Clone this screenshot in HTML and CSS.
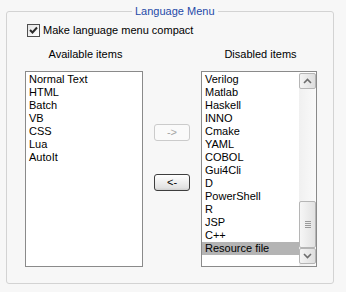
FILE: index.html
```html
<!DOCTYPE html>
<html lang="en">
<head>
    <meta charset="UTF-8">
    <title>Language Menu</title>
    <link rel="stylesheet" href="styles.css">
</head>
<body>
    <div class="group">
        <div class="group-title">Language Menu</div>

        <label class="check-row">
            <span class="checkbox">
                <svg width="9" height="9" viewBox="0 0 9 9">
                    <path d="M1 4 L3.5 6.5 L8 1.5" fill="none" stroke="#2b2b2b" stroke-width="2"/>
                </svg>
            </span>
            Make language menu compact
        </label>

        <div class="columns">
            <div class="column left-col">
                <div class="col-label">Available items</div>
                <div class="listbox left-list">
                    <div class="items">
                        <div class="item">Normal Text</div>
                        <div class="item">HTML</div>
                        <div class="item">Batch</div>
                        <div class="item">VB</div>
                        <div class="item">CSS</div>
                        <div class="item">Lua</div>
                        <div class="item">AutoIt</div>
                    </div>
                </div>
            </div>

            <div class="middle">
                <button class="btn disabled">-&gt;</button>
                <button class="btn">&lt;-</button>
            </div>

            <div class="column right-col">
                <div class="col-label">Disabled items</div>
                <div class="listbox right-list">
                    <div class="items">
                        <div class="item">Verilog</div>
                        <div class="item">Matlab</div>
                        <div class="item">Haskell</div>
                        <div class="item">INNO</div>
                        <div class="item">Cmake</div>
                        <div class="item">YAML</div>
                        <div class="item">COBOL</div>
                        <div class="item">Gui4Cli</div>
                        <div class="item">D</div>
                        <div class="item">PowerShell</div>
                        <div class="item">R</div>
                        <div class="item">JSP</div>
                        <div class="item">C++</div>
                        <div class="item selected">Resource file</div>
                    </div>
                    <div class="scrollbar">
                        <div class="sb-btn">
                            <svg width="9" height="6" viewBox="0 0 9 6">
                                <path d="M1 5 L4.5 1.5 L8 5" fill="none" stroke="#6d6d6d" stroke-width="1.6"/>
                            </svg>
                        </div>
                        <div class="sb-track"></div>
                        <div class="sb-thumb">
                            <div class="grip"></div>
                            <div class="grip"></div>
                            <div class="grip"></div>
                            <div class="grip"></div>
                        </div>
                        <div class="sb-btn">
                            <svg width="9" height="6" viewBox="0 0 9 6">
                                <path d="M1 1 L4.5 4.5 L8 1" fill="none" stroke="#6d6d6d" stroke-width="1.6"/>
                            </svg>
                        </div>
                    </div>
                </div>
            </div>
        </div>
    </div>
</body>
</html>
```

FILE: styles.css
```css
* {
    margin: 0;
    padding: 0;
    box-sizing: border-box;
}

body {
    background: #f7f7f7;
    font-family: "Liberation Sans", Arial, sans-serif;
    font-size: 11px;
    color: #000;
    width: 346px;
    height: 292px;
    overflow: hidden;
    padding: 11px 0 0 6px;
}

/* Cadre du groupe */
.group {
    position: relative;
    width: 328px;
    height: 273px;
    border: 1px solid #d3d3d3;
    border-radius: 3px;
    padding: 12px 0 0 18px;
}

.group-title {
    position: absolute;
    top: -8px;
    left: 125px;
    padding: 0 3px;
    background: #f7f7f7;
    color: #1f4aa8;
    line-height: 14px;
}

/* Case a cocher */
.check-row {
    display: flex;
    align-items: center;
    gap: 3px;
    height: 13px;
    margin-left: 2px;
    line-height: 13px;
}

.checkbox {
    width: 13px;
    height: 13px;
    border: 1px solid #4e4e4e;
    background: linear-gradient(135deg, #e4e4e4, #ffffff);
    display: flex;
    align-items: center;
    justify-content: center;
}

/* Colonnes */
.columns {
    display: flex;
    margin-top: 11px;
}

.column {
    display: flex;
    flex-direction: column;
}

.left-col {
    width: 118px;
}

.right-col {
    width: 116px;
}

.col-label {
    text-align: center;
    line-height: 13px;
    height: 13px;
    margin-bottom: 10px;
    padding-left: 3px;
}

.listbox {
    height: 196px;
    border: 1px solid #8a8a8a;
    background: #fff;
    display: flex;
    padding-top: 1px;
}

.items {
    flex: 1;
}

.item {
    line-height: 13px;
    height: 13px;
    padding-left: 3px;
    white-space: nowrap;
}

.item.selected {
    background: #b4b4b4;
}

/* Barre de defilement */
.scrollbar {
    width: 17px;
    display: flex;
    flex-direction: column;
    padding: 0 0 2px 0;
    background: linear-gradient(90deg, #f0f0f0, #fafafa);
}

.sb-btn {
    height: 16px;
    border: 1px solid #b5b5b5;
    border-radius: 2px;
    background: linear-gradient(90deg, #f4f4f4, #dedede);
    display: flex;
    align-items: center;
    justify-content: center;
}

.sb-track {
    flex: 1;
}

.sb-thumb {
    height: 47px;
    border: 1px solid #b5b5b5;
    border-radius: 2px;
    background: linear-gradient(90deg, #f6f6f6, #e2e2e2);
    display: flex;
    flex-direction: column;
    align-items: center;
    justify-content: center;
    gap: 1px;
}

.grip {
    width: 6px;
    height: 1px;
    background: #9a9a9a;
}

/* Boutons du milieu */
.middle {
    width: 58px;
    display: flex;
    flex-direction: column;
    align-items: center;
    padding-top: 76px;
    gap: 33px;
}

.btn {
    width: 36px;
    height: 17px;
    font-family: "Liberation Sans", Arial, sans-serif;
    font-size: 11px;
    border: 1px solid #3e3e3e;
    border-radius: 3px;
    background: linear-gradient(180deg, #ffffff, #e2e2e2 85%, #cfcfcf);
    color: #000;
    line-height: 13px;
}

.btn.disabled {
    border-color: #cbcbcb;
    background: #fafafa;
    color: #a5a5a5;
}
```
